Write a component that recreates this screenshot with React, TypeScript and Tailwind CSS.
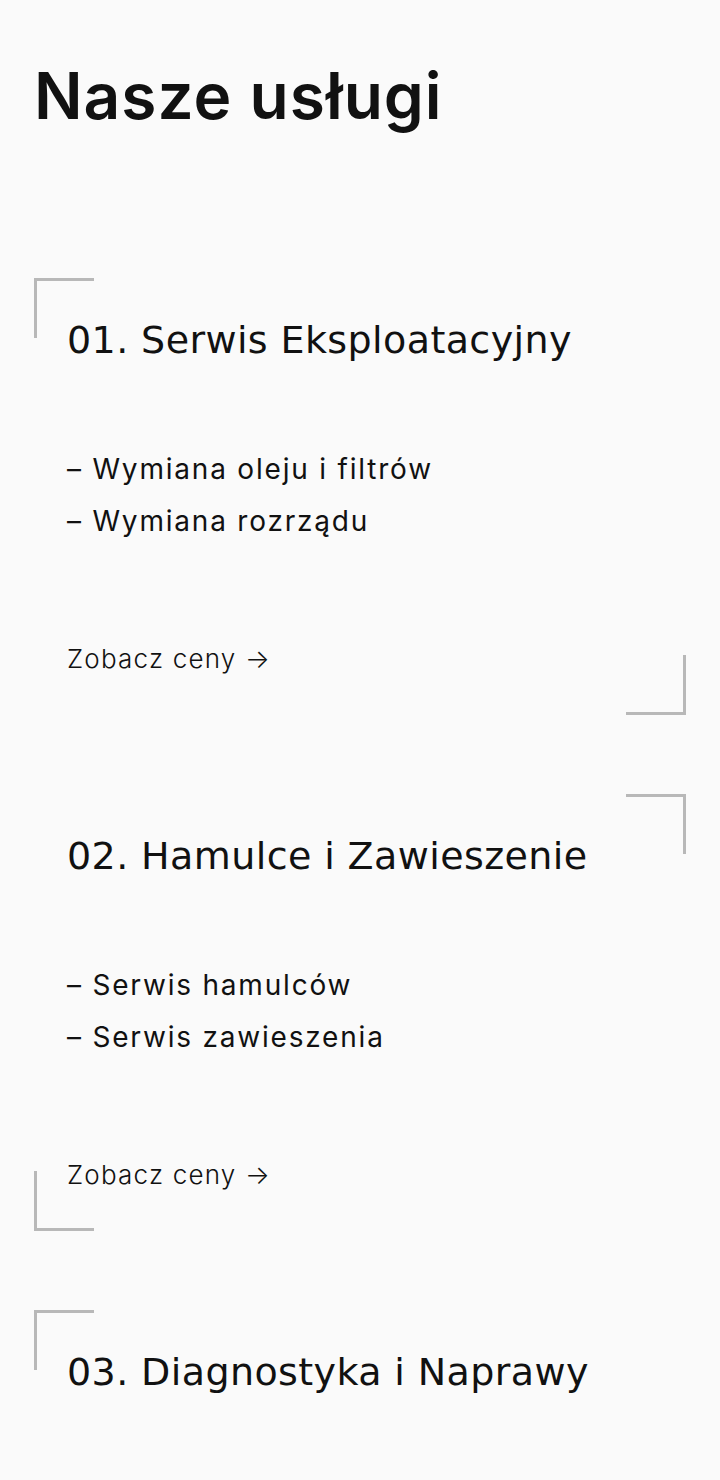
import React from "react";

type Pos = "tl" | "br" | "tr" | "bl";

const Corner = ({ pos }: { pos: Pos }) => {
  const base = "absolute w-[60px] h-[60px] border-[#b8b8b8] pointer-events-none";
  const cls =
    pos === "tl"
      ? "top-0 left-0 border-t-[3px] border-l-[3px]"
      : pos === "br"
      ? "bottom-0 right-0 border-b-[3px] border-r-[3px]"
      : pos === "tr"
      ? "top-0 right-0 border-t-[3px] border-r-[3px]"
      : "bottom-0 left-0 border-b-[3px] border-l-[3px]";
  return <div className={`${base} ${cls}`} />;
};

const display = { fontFamily: 'Inter, "Noto Sans", sans-serif' };
const titleFont = { fontFamily: '"DejaVu Sans", "Noto Sans", sans-serif' };
const body = { fontFamily: 'Inter, "Noto Sans", sans-serif' };

type Service = { title: string; items: string[]; corners: Pos[] };

const services: Service[] = [
  { title: "01. Serwis Eksploatacyjny", items: ["– Wymiana oleju i filtrów", "– Wymiana rozrządu"], corners: ["tl", "br"] },
  { title: "02. Hamulce i Zawieszenie", items: ["– Serwis hamulców", "– Serwis zawieszenia"], corners: ["tr", "bl"] },
];

export default function App() {
  return (
    <div className="h-[1480px] overflow-hidden bg-[#fafafa] text-[#111111] px-[34px] pt-[60px]">
      <h1 className="text-[64px] leading-[72px] font-semibold tracking-[1px]" style={display}>
        Nasze usługi
      </h1>
      <div className="mt-[146px] flex flex-col gap-[79px]">
        {services.map((s) => (
          <div key={s.title} className="relative px-[33px] pt-[40px] pb-[39px]">
            {s.corners.map((c) => (
              <Corner key={c} pos={c} />
            ))}
            <h2 className="text-[38px] leading-[44px] font-normal tracking-[0.4px]" style={titleFont}>
              {s.title}
            </h2>
            <ul className="mt-[89px] flex flex-col gap-[16px] text-[28px] leading-[36px] tracking-[1.8px]" style={body}>
              {s.items.map((i) => (
                <li key={i}>{i}</li>
              ))}
            </ul>
            <a className="mt-[103px] block text-[26px] leading-[34px] font-light tracking-[1.2px]" style={body}>
              Zobacz ceny →
            </a>
          </div>
        ))}
        <div className="relative px-[33px] pt-[40px] min-h-[300px]">
          <Corner pos="tl" />
          <h2 className="text-[38px] leading-[44px] font-normal tracking-[0.4px]" style={titleFont}>
            03. Diagnostyka i Naprawy
          </h2>
        </div>
      </div>
    </div>
  );
}
